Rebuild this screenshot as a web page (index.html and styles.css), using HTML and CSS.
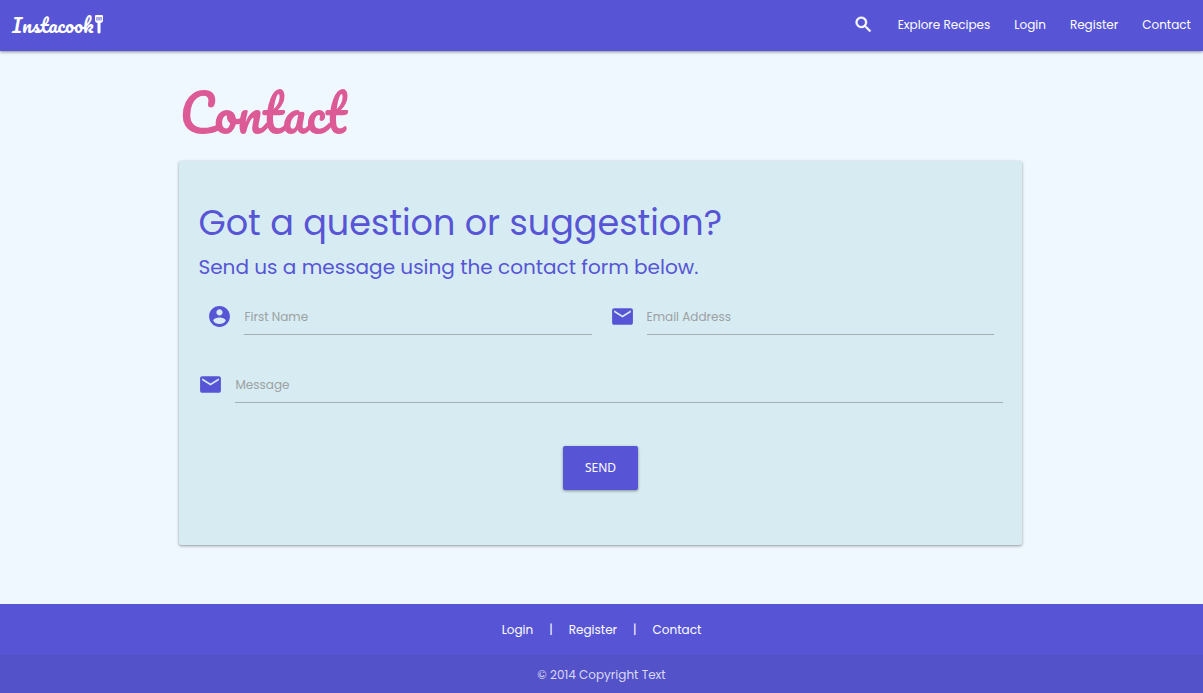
FILE: index.html
```html
<!DOCTYPE html>
<html lang="en">
<head>
<meta charset="utf-8">
<meta name="viewport" content="width=device-width, initial-scale=1">
<title>Instacook - Contact</title>
<link rel="stylesheet" href="styles.css">
</head>
<body class="page">
<header class="navbar">
  <a class="brand" href="#"><span class="brand-name">Instacook</span><svg class="brand-icon" viewBox="0 0 8 19" aria-hidden="true"><path fill="currentColor" fill-rule="evenodd" d="M1 0h6q1 0 1 1v4.500q0 2-2.500 2.500v9.500q0 1-1.500 1t-1.500-1V8Q0 7.500 0 5.500V1q0-1 1-1zM1.500 2v3.500h1V2zM3.500 2v3.500h1V2zM5.500 2v3.500h1V2z"/></svg></a>
  <nav class="nav-links" aria-label="Main">
    <a class="nav-search" href="#" aria-label="Search"><svg class="search-icon" viewBox="0 0 24 24" aria-hidden="true"><path fill="currentColor" stroke="currentColor" stroke-width=".5" d="M15.500 14h-.79l-.28-.27A6.470 6.470 0 0 0 16 9.500 6.500 6.500 0 1 0 9.500 16c1.610 0 3.090-.59 4.230-1.570l.27.28v.79l5 4.990L20.490 19l-4.990-5zm-6 0C7.010 14 5 11.990 5 9.500S7.010 5 9.500 5 14 7.010 14 9.500 11.990 14 9.500 14z"/></svg></a>
    <a class="nav-link" href="#">Explore Recipes</a>
    <a class="nav-link" href="#">Login</a>
    <a class="nav-link" href="#">Register</a>
    <a class="nav-link" href="#">Contact</a>
  </nav>
</header>
<main class="content">
  <h1 class="page-title">Contact</h1>
  <section class="card">
    <h2 class="card-title">Got a question or suggestion?</h2>
    <p class="card-lead">Send us a message using the contact form below.</p>
    <form class="contact-form">
      <div class="field-row">
        <div class="field">
          <label class="field-label" for="name" aria-label="First Name"><svg class="field-icon" viewBox="0 0 24 24" aria-hidden="true"><path fill="currentColor" d="M12 2C6.480 2 2 6.480 2 12s4.480 10 10 10 10-4.480 10-10S17.520 2 12 2zm0 3c1.660 0 3 1.340 3 3s-1.340 3-3 3-3-1.340-3-3 1.340-3 3-3zm0 14.200c-2.500 0-4.710-1.280-6-3.220.03-1.990 4-3.080 6-3.080 1.990 0 5.970 1.090 6 3.080-1.290 1.940-3.500 3.220-6 3.220z"/></svg></label>
          <input class="field-input" id="name" type="text" placeholder="First Name">
        </div>
        <div class="field">
          <label class="field-label" for="email" aria-label="Email Address"><svg class="field-icon" viewBox="0 0 24 24" aria-hidden="true"><path fill="currentColor" d="M20 4H4c-1.100 0-1.990.9-1.990 2L2 18c0 1.100.9 2 2 2h16c1.100 0 2-.9 2-2V6c0-1.100-.9-2-2-2zm0 4l-8 5-8-5V6l8 5 8-5v2z"/></svg></label>
          <input class="field-input" id="email" type="email" placeholder="Email Address">
        </div>
      </div>
      <div class="field">
        <label class="field-label" for="message" aria-label="Message"><svg class="field-icon" viewBox="0 0 24 24" aria-hidden="true"><path fill="currentColor" d="M20 4H4c-1.100 0-1.990.9-1.990 2L2 18c0 1.100.9 2 2 2h16c1.100 0 2-.9 2-2V6c0-1.100-.9-2-2-2zm0 4l-8 5-8-5V6l8 5 8-5v2z"/></svg></label>
        <input class="field-input" id="message" type="text" placeholder="Message">
      </div>
      <button class="send" type="submit">SEND</button>
    </form>
  </section>
</main>
<footer class="footer">
  <nav class="footer-links" aria-label="Footer">
    <a class="footer-link" href="#">Login</a>
    <span class="footer-divider">|</span>
    <a class="footer-link" href="#">Register</a>
    <span class="footer-divider">|</span>
    <a class="footer-link" href="#">Contact</a>
  </nav>
  <div class="copyright">© 2014 Copyright Text</div>
</footer>
</body>
</html>
```

FILE: styles.css
```css
* {
  box-sizing: border-box;
}

.page {
  display: flex;
  flex-direction: column;
  min-height: 100vh;
  margin: 0;
  background: #f0f8ff;
  color: #5755d6;
  font-family: Poppins, Inter, sans-serif;
  font-size: 12px;
  line-height: 20px;
}

.navbar {
  display: flex;
  align-items: center;
  justify-content: space-between;
  padding: 7px 12px 9px;
  min-height: 51px;
  background: #5755d6;
  color: #fff;
  box-shadow: 0 1px 3px rgba(0, 0, 0, 0.45);
}

.brand {
  display: flex;
  align-items: center;
  gap: 2px;
  color: inherit;
  text-decoration: none;
}

.brand-name {
  font-family: Pacifico, "Liberation Serif", serif;
  font-size: 20px;
  font-weight: 400;
  line-height: 24px;
}

.brand-icon {
  width: 8px;
  height: 19px;
}

.nav-links {
  display: flex;
  align-items: center;
  gap: 24px;
}

.nav-link,
.nav-search {
  color: inherit;
  text-decoration: none;
}

.search-icon {
  display: block;
  width: 21px;
  height: 21px;
}

.content {
  flex: 1;
  width: 70%;
  margin: 0 calc(15% + 1px) 0 auto;
  padding: 32px 0 56px;
}

.page-title {
  margin: 0;
  color: #dc5a96;
  font-family: Pacifico, "Liberation Serif", serif;
  font-size: 51px;
  font-weight: 400;
  line-height: 60px;
}

.card {
  margin-top: 18px;
  padding: 36px 19px 55px;
  border-radius: 2px;
  background: #d6ecf2;
  box-shadow: 0 1px 3px rgba(0, 0, 0, 0.4);
}

.card-title {
  margin: 0;
  font-size: 35px;
  font-weight: 400;
  line-height: 52px;
}

.card-lead {
  margin: 4px 0 18px;
  font-size: 20px;
  line-height: 28px;
}

.contact-form {
  display: flex;
  flex-direction: column;
  gap: 32px;
}

.field-row {
  display: grid;
  grid-template-columns: 1fr 1fr;
  gap: 18px;
  padding: 0 9px;
}

.field {
  display: flex;
  align-items: center;
  gap: 12px;
}

.field-label {
  padding-bottom: 2px;
}

.field-icon {
  display: block;
  width: 25px;
  height: 25px;
}

.field-input {
  flex: 1;
  min-width: 0;
  height: 36px;
  padding: 0;
  border: 0;
  border-bottom: 1px solid #a5afb2;
  background: transparent;
  color: #333;
  font: inherit;
}

.field-input::placeholder {
  color: #9da1a3;
  opacity: 1;
}

.send {
  align-self: center;
  margin-top: 11px;
  padding: 12px 22px;
  border: 0;
  border-radius: 2px;
  background: #5755d6;
  color: #fff;
  box-shadow: 0 1px 3px rgba(0, 0, 0, 0.4);
  font-family: "Noto Sans", sans-serif;
  font-size: 12px;
  line-height: 20px;
}

.footer {
  background: #5755d6;
  color: #fff;
  text-align: center;
}

.footer-links {
  display: flex;
  justify-content: center;
  gap: 16px;
  padding: 16px 0 15px;
}

.footer-link {
  color: inherit;
  text-decoration: none;
}

.copyright {
  padding: 10px 0 8px;
  background: #5452c8;
  color: #d9d8f4;
}
```
